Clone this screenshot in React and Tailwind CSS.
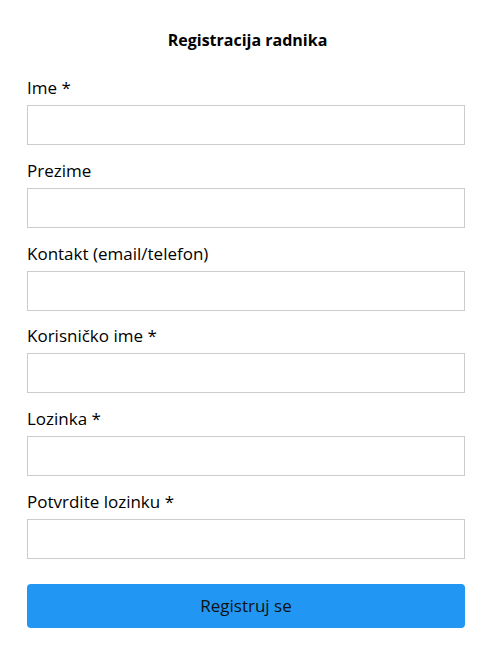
import React from "react";

const fields = [
  "Ime *",
  "Prezime",
  "Kontakt (email/telefon)",
  "Korisničko ime *",
  "Lozinka *",
  "Potvrdite lozinku *",
];

export default function App() {
  return (
    <div className="min-h-[653px] bg-white text-black" style={{ fontFamily: '"Open Sans", "Noto Sans", sans-serif' }}>
      <div className="pt-[28px] pl-[27px] w-[465px]">
        <h1 className="text-center text-[16px] font-bold leading-[24px] mb-[24px] ml-[3px]">Registracija radnika</h1>
        {fields.map((f) => (
          <div key={f} className="mb-[13.8px]">
            <label className="block text-[17px] leading-[24px] mb-[5px]">{f}</label>
            <input
              type={f.startsWith("Lozinka") || f.startsWith("Potvrdite") ? "password" : "text"}
              className="block w-[438px] h-[40px] border border-[#cccccc] bg-white outline-none"
            />
          </div>
        ))}
        <button className="mt-[11px] w-[438px] h-[44px] rounded-[4px] bg-[#2196f3] text-[17px] text-[#111]">Registruj se</button>
      </div>
    </div>
  );
}
